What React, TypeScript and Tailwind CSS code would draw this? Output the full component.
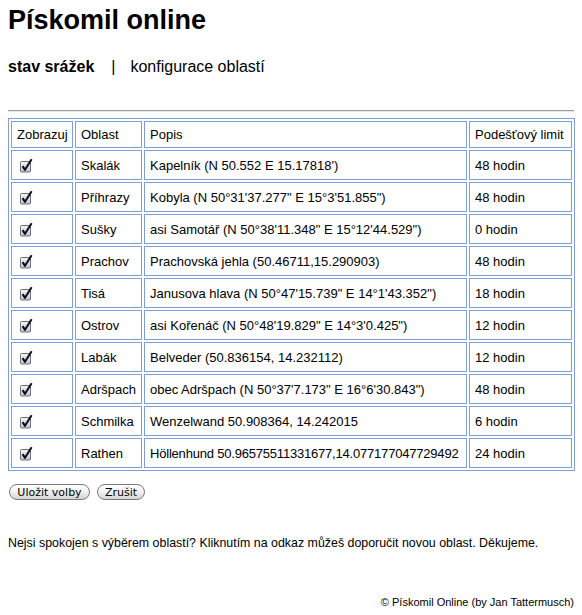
import * as React from "react";

type Area = {
  name: string;
  desc: string;
  limit: string;
  tight?: boolean;
};

const areas: Area[] = [
  { name: "Skalák", desc: "Kapelník (N 50.552 E 15.17818')", limit: "48 hodin" },
  { name: "Příhrazy", desc: "Kobyla (N 50°31'37.277\" E 15°3'51.855\")", limit: "48 hodin" },
  { name: "Sušky", desc: "asi Samotář (N 50°38'11.348\" E 15°12'44.529\")", limit: "0 hodin" },
  { name: "Prachov", desc: "Prachovská jehla (50.46711,15.290903)", limit: "48 hodin" },
  { name: "Tisá", desc: "Janusova hlava (N 50°47'15.739\" E 14°1'43.352\")", limit: "18 hodin" },
  { name: "Ostrov", desc: "asi Kořenáč (N 50°48'19.829\" E 14°3'0.425\")", limit: "12 hodin" },
  { name: "Labák", desc: "Belveder (50.836154, 14.232112)", limit: "12 hodin" },
  { name: "Adršpach", desc: "obec Adršpach (N 50°37'7.173\" E 16°6'30.843\")", limit: "48 hodin" },
  { name: "Schmilka", desc: "Wenzelwand 50.908364, 14.242015", limit: "6 hodin" },
  {
    name: "Rathen",
    desc: "Höllenhund 50.96575511331677,14.077177047729492",
    limit: "24 hodin",
    tight: true,
  },
];

function CheckMark() {
  return (
    <svg width="13" height="15" viewBox="0 0 13 15" className="ml-[3px] block">
      <defs>
        <linearGradient id="cb" x1="0" y1="0" x2="0" y2="1">
          <stop offset="0" stopColor="#f4f6fa" />
          <stop offset="1" stopColor="#bcc6d4" />
        </linearGradient>
      </defs>
      <rect x="0.5" y="3.5" width="10" height="10.5" rx="1" fill="url(#cb)" stroke="#66707c" />
      <path d="M2.6 8.2 L5 11.8 L11.6 1.2" fill="none" stroke="#111" strokeWidth="2.1" strokeLinejoin="round" />
    </svg>
  );
}

function PillButton({ label, width }: { label: string; width: string }) {
  return (
    <button
      type="button"
      className={`${width} flex h-[16px] items-center justify-center rounded-full border border-[#7a7a7a] bg-gradient-to-b from-white via-[#f1f1f1] to-[#d4d4d4] font-['DejaVu_Sans',sans-serif] text-[11px] leading-none text-black`}
    >
      {label}
    </button>
  );
}

const cell = "border border-[#7e9fd5] px-[5px] py-0 text-left align-middle font-normal";

export default function App() {
  return (
    <div className="w-[582px] bg-white px-[8px] font-['Liberation_Sans',Arial,sans-serif] text-black">
      <h1 className="mt-[5px] text-[27px] font-bold leading-[30px]">Pískomil online</h1>

      <nav className="mt-[22px] flex text-[16px] leading-[20px]">
        <span className="font-bold">stav srážek</span>
        <span className="ml-[17px] mr-[15px]">|</span>
        <span>konfigurace oblastí</span>
      </nav>

      <div className="mt-[33px] h-[2px] border-t border-b border-t-[#9c9c9c] border-b-[#e8e8e8]" />

      <table className="mt-[6px] w-[567px] table-fixed border-separate border-spacing-[2px] border border-[#7e9fd5] text-[13px] leading-[15px]">
        <colgroup>
          <col className="w-[62px]" />
          <col className="w-[67px]" />
          <col className="w-[323px]" />
          <col className="w-[103px]" />
        </colgroup>
        <thead>
          <tr>
            <th className={`${cell} h-[27px]`}>Zobrazuj</th>
            <th className={`${cell} h-[27px]`}>Oblast</th>
            <th className={`${cell} h-[27px]`}>Popis</th>
            <th className={`${cell} h-[27px] whitespace-nowrap`}>Podešťový limit</th>
          </tr>
        </thead>
        <tbody>
          {areas.map((a) => (
            <tr key={a.name}>
              <td className={`${cell} h-[30px]`}>
                <CheckMark />
              </td>
              <td className={`${cell} h-[30px] whitespace-nowrap`}>{a.name}</td>
              <td
                className={`${cell} h-[30px] whitespace-nowrap ${a.tight ? "tracking-[-0.2px]" : ""}`}
              >
                {a.desc}
              </td>
              <td className={`${cell} h-[30px] whitespace-nowrap`}>{a.limit}</td>
            </tr>
          ))}
        </tbody>
      </table>

      <div className="mt-[13px] flex gap-[7px] pl-[1px]">
        <PillButton label="Uložit volby" width="w-[81px]" />
        <PillButton label="Zrušit" width="w-[48px]" />
      </div>

      <p className="mt-[36px] text-[12.4px] leading-[15px]">
        Nejsi spokojen s výběrem oblastí? Kliknutím na odkaz můžeš doporučit novou oblast. Děkujeme.
      </p>

      <p className="mt-[44px] pb-[8px] text-right text-[11px] leading-[15px]">
        © Pískomil Online (by Jan Tattermusch)
      </p>
    </div>
  );
}
